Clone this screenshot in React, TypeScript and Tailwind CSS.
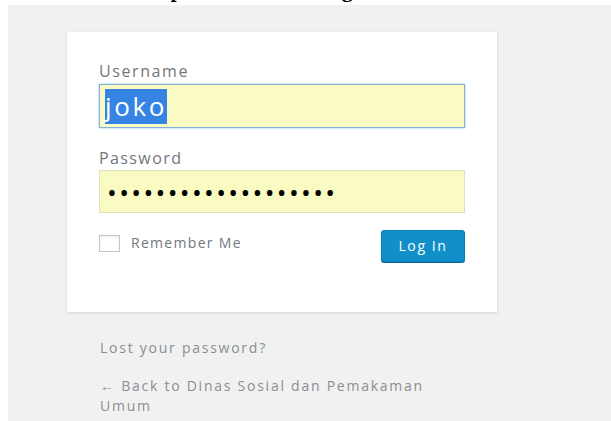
import React from 'react';

const PASSWORD_LENGTH = 19;

const Caption: React.FC = () => (
  // only the bottom of the figure caption fits above the frame
  <div className="h-[5px] shrink-0 overflow-hidden pl-[28px]">
    <p className="-mt-[22px] whitespace-nowrap font-['Liberation_Serif',serif] text-[22px] font-bold leading-[24px] text-black">
      Gambar 4 Tampilan Halaman Login
    </p>
  </div>
);

const LoginForm: React.FC = () => (
  <div className="h-[280px] w-[430px] bg-white px-[32px] pt-[28px] shadow-[0_1px_3px_rgba(0,0,0,0.13)]">
    <label className="block text-[16px] leading-[22px] tracking-[1.6px] text-[#72777c]">Username</label>
    <div className="mt-[2px] flex h-[44px] items-center border border-[#86b0dc] bg-[#fafbc2] pl-[5px] shadow-[0_0_2px_rgba(30,140,190,0.5)]">
      <span className="bg-[#3584e4] text-[26px] leading-[35px] tracking-[2.6px] text-white">joko</span>
    </div>

    <label className="mt-[19px] block text-[16px] leading-[22px] tracking-[1.4px] text-[#72777c]">Password</label>
    <div className="mt-[1px] flex h-[43px] items-center border border-[#dedfc0] bg-[#fafbc2] pl-[7px]">
      <span className="text-[26px] leading-[30px] tracking-[2.35px] text-black">
        {'•'.repeat(PASSWORD_LENGTH)}
      </span>
    </div>

    <div className="mt-[17px] flex items-start justify-between">
      <div className="mt-[3px] flex items-center gap-[11px]">
        <span className="h-[17px] w-[21px] border border-[#c3c6c9] bg-white shadow-[inset_0_1px_2px_rgba(0,0,0,0.08)]" />
        <span className="text-[14px] leading-[20px] tracking-[1.3px] text-[#72777c]">Remember Me</span>
      </div>
      <button className="h-[32px] w-[84px] rounded-[3px] border border-[#0b7fb3] bg-[#118fc8] text-[14px] leading-[20px] tracking-[1.6px] text-white shadow-[0_1px_0_#0a6d9c]">
        Log In
      </button>
    </div>
  </div>
);

export default function App() {
  return (
    <div className="flex h-[421px] w-[611px] flex-col overflow-hidden bg-white font-['Open_Sans',sans-serif]">
      <Caption />
      <div className="ml-[8px] flex-1 bg-[#f1f1f1] pl-[59px] pt-[27px]">
        <LoginForm />
        <div className="w-[370px] pl-[33px] pt-[26px] text-[14px] leading-[20px] tracking-[1.75px] text-[#8a8e92]">
          <p>Lost your password?</p>
          <p className="mt-[18px]">← Back to Dinas Sosial dan Pemakaman Umum</p>
        </div>
      </div>
    </div>
  );
}
